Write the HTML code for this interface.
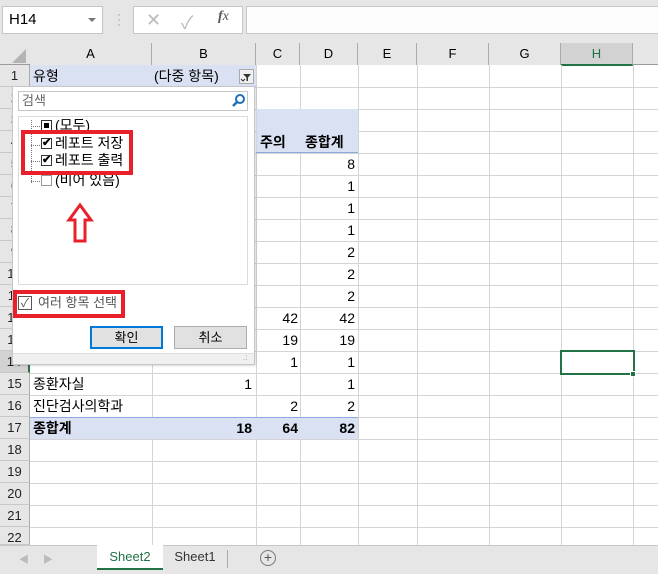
<!DOCTYPE html><html><head><meta charset="utf-8"><style>
*{margin:0;padding:0;box-sizing:border-box}
body{width:658px;height:574px;overflow:hidden;background:#fff;position:relative;font-family:"Liberation Sans","Noto Sans CJK KR",sans-serif;font-size:14px;color:#000}
.a{position:absolute}
.vl{position:absolute;top:65px;height:480px;width:1px;background:#d4d4d4}
.hl{position:absolute;left:0;width:658px;height:1px;background:#d4d4d4}
.rh{position:absolute;left:0;width:30px;height:22px;background:#e6e6e6;border-bottom:1px solid #c8c8c8;border-right:1px solid #ababab;text-align:center;font-size:13px;line-height:22px;color:#222}
.ch{position:absolute;top:43px;height:22px;background:#e6e6e6;border-right:1px solid #ababab;text-align:center;font-size:13px;line-height:22px}
.t{position:absolute;font-size:14px;line-height:22px;white-space:nowrap}
.r{text-align:right}
.blue{position:absolute;background:#d9e1f2}
</style></head><body>
<div class="a" style="left:0;top:0;width:658px;height:43px;background:#e6e6e6"></div>
<div class="a" style="left:2px;top:6px;width:101px;height:28px;background:#fff;border:1px solid #c6c6c6;font-size:15px;line-height:26px;padding-left:6px">H14</div>
<div class="a" style="left:88px;top:18px;border-left:4px solid transparent;border-right:4px solid transparent;border-top:4px solid #777"></div>
<div class="a" style="left:117px;top:12px;color:#999;font-size:12px;line-height:5px">·<br>·<br>·</div>
<div class="a" style="left:133px;top:6px;width:110px;height:28px;background:#fff;border:1px solid #c6c6c6"></div>
<div class="a" style="left:146px;top:10px;color:#bbb;font-size:18px">✕</div>
<div class="a" style="left:181px;top:9px;color:#bbb;font-size:18px">✓</div>
<div class="a" style="left:218px;top:9px;color:#555;font-size:14px;font-style:italic;font-family:'Liberation Serif',serif"><b>f</b>x</div>
<div class="a" style="left:246px;top:6px;width:412px;height:28px;background:#fdfdfd;border:1px solid #c6c6c6;border-right:none"></div>
<div class="a" style="left:0;top:43px;width:658px;height:22px;background:#e6e6e6;border-bottom:1px solid #9a9a9a"></div>
<div class="a" style="left:12px;top:49px;width:0;height:0;border-left:14px solid transparent;border-bottom:14px solid #b4b4b4"></div>
<div class="ch" style="left:30px;width:122px">A</div>
<div class="ch" style="left:152px;width:104px">B</div>
<div class="ch" style="left:256px;width:44px">C</div>
<div class="ch" style="left:300px;width:58px">D</div>
<div class="ch" style="left:358px;width:59px">E</div>
<div class="ch" style="left:417px;width:72px">F</div>
<div class="ch" style="left:489px;width:72px">G</div>
<div class="ch" style="left:561px;width:72px;background:#d2d2d2;color:#217346;border-bottom:2px solid #217346;height:23px">H</div>
<div class="vl" style="left:152px"></div><div class="vl" style="left:256px"></div><div class="vl" style="left:300px"></div><div class="vl" style="left:358px"></div><div class="vl" style="left:417px"></div><div class="vl" style="left:489px"></div><div class="vl" style="left:561px"></div><div class="vl" style="left:633px"></div>
<div class="hl" style="top:87px"></div><div class="hl" style="top:109px"></div><div class="hl" style="top:131px"></div><div class="hl" style="top:153px"></div><div class="hl" style="top:175px"></div><div class="hl" style="top:197px"></div><div class="hl" style="top:219px"></div><div class="hl" style="top:241px"></div><div class="hl" style="top:263px"></div><div class="hl" style="top:285px"></div><div class="hl" style="top:307px"></div><div class="hl" style="top:329px"></div><div class="hl" style="top:351px"></div><div class="hl" style="top:373px"></div><div class="hl" style="top:395px"></div><div class="hl" style="top:417px"></div><div class="hl" style="top:439px"></div><div class="hl" style="top:461px"></div><div class="hl" style="top:483px"></div><div class="hl" style="top:505px"></div><div class="hl" style="top:527px"></div>
<div class="rh" style="top:65px">1</div><div class="rh" style="top:87px">2</div><div class="rh" style="top:109px">3</div><div class="rh" style="top:131px">4</div><div class="rh" style="top:153px">5</div><div class="rh" style="top:175px">6</div><div class="rh" style="top:197px">7</div><div class="rh" style="top:219px">8</div><div class="rh" style="top:241px">9</div><div class="rh" style="top:263px">10</div><div class="rh" style="top:285px">11</div><div class="rh" style="top:307px">12</div><div class="rh" style="top:329px">13</div><div class="rh" style="top:351px;background:#d2d2d2;border-right:2px solid #217346">14</div><div class="rh" style="top:373px">15</div><div class="rh" style="top:395px">16</div><div class="rh" style="top:417px">17</div><div class="rh" style="top:439px">18</div><div class="rh" style="top:461px">19</div><div class="rh" style="top:483px">20</div><div class="rh" style="top:505px">21</div><div class="rh" style="top:527px;height:18px">22</div>
<div class="blue" style="left:30px;top:65px;width:226px;height:22px"></div>
<div class="t" style="left:33px;top:65px">유형</div>
<div class="t" style="left:154px;top:65px">(다중 항목)</div>
<div class="a" style="left:239px;top:69px;width:15px;height:15px;background:#f0f0f0;border:1px solid #aaa"></div>
<svg class="a" style="left:240px;top:70px" width="13" height="13"><path d="M3 4 H11 L8 7.5 V11 H6.5 V7.5 Z" fill="#333"/><path d="M1 9 L3 11 L5 9" fill="none" stroke="#333"/></svg>
<div class="blue" style="left:256px;top:109px;width:102px;height:44px;border-bottom:1px solid #8ea9db"></div>
<div class="t" style="left:260px;top:131px;font-weight:bold">주의</div>
<div class="t" style="left:305px;top:131px;font-weight:bold">종합계</div>
<div class="t r" style="left:300px;top:153px;width:55px">8</div>
<div class="t r" style="left:300px;top:175px;width:55px">1</div>
<div class="t r" style="left:300px;top:197px;width:55px">1</div>
<div class="t r" style="left:300px;top:219px;width:55px">1</div>
<div class="t r" style="left:300px;top:241px;width:55px">2</div>
<div class="t r" style="left:300px;top:263px;width:55px">2</div>
<div class="t r" style="left:300px;top:285px;width:55px">2</div>
<div class="t r" style="left:256px;top:307px;width:42px">42</div><div class="t r" style="left:300px;top:307px;width:55px">42</div>
<div class="t r" style="left:256px;top:329px;width:42px">19</div><div class="t r" style="left:300px;top:329px;width:55px">19</div>
<div class="t r" style="left:256px;top:351px;width:42px">1</div><div class="t r" style="left:300px;top:351px;width:55px">1</div>
<div class="t" style="left:33px;top:373px">종환자실</div><div class="t r" style="left:152px;top:373px;width:100px">1</div><div class="t r" style="left:300px;top:373px;width:55px">1</div>
<div class="t" style="left:33px;top:395px">진단검사의학과</div><div class="t r" style="left:256px;top:395px;width:42px">2</div><div class="t r" style="left:300px;top:395px;width:55px">2</div>
<div class="blue" style="left:30px;top:417px;width:328px;height:22px;border-top:1px solid #8ea9db"></div>
<div class="t" style="left:33px;top:417px;font-weight:bold">종합계</div>
<div class="t r" style="left:152px;top:417px;width:100px;font-weight:bold">18</div>
<div class="t r" style="left:256px;top:417px;width:42px;font-weight:bold">64</div>
<div class="t r" style="left:300px;top:417px;width:55px;font-weight:bold">82</div>
<div class="a" style="left:560px;top:350px;width:75px;height:25px;border:2px solid #217346"></div>
<div class="a" style="left:630px;top:371px;width:6px;height:6px;background:#217346;border:1px solid #fff"></div>
<div class="a" style="left:12px;top:86px;width:243px;height:279px;background:#fff;border:1px solid #c6c6c6;box-shadow:1px 1px 2px rgba(0,0,0,.15)"></div>
<div class="a" style="left:18px;top:91px;width:230px;height:20px;border:1px solid #c6c6c6;font-size:13px;line-height:18px;color:#666;padding-left:3px">검색</div>
<svg class="a" style="left:231px;top:93px" width="15" height="15"><circle cx="9" cy="6" r="4" fill="none" stroke="#1e6fb8" stroke-width="2"/><line x1="6" y1="9" x2="2" y2="13" stroke="#1e6fb8" stroke-width="2.5"/></svg>
<div class="a" style="left:18px;top:116px;width:230px;height:169px;border:1px solid #dcdcdc"></div>
<div class="a" style="left:31px;top:120px;height:63px;border-left:1px dotted #777"></div>
<div class="a" style="left:31px;top:126px;width:9px;border-top:1px dotted #777"></div>
<div class="a" style="left:31px;top:145px;width:9px;border-top:1px dotted #777"></div>
<div class="a" style="left:31px;top:161px;width:9px;border-top:1px dotted #777"></div>
<div class="a" style="left:31px;top:181px;width:9px;border-top:1px dotted #777"></div>
<div class="a" style="left:41px;top:120px;width:11px;height:11px;border:1px solid #333;background:#fff"><div style="margin:2px;width:5px;height:5px;background:#000"></div></div>
<div class="t" style="left:55px;top:114px;font-size:14px">(모두)</div>
<div class="a" style="left:41px;top:138px;width:11px;height:11px;border:1px solid #333;font-size:11px;line-height:9px;font-weight:bold">✔</div>
<div class="t" style="left:55px;top:132px;font-size:14px">레포트 저장</div>
<div class="a" style="left:41px;top:155px;width:11px;height:11px;border:1px solid #333;font-size:11px;line-height:9px;font-weight:bold">✔</div>
<div class="t" style="left:55px;top:149px;font-size:14px">레포트 출력</div>
<div class="a" style="left:41px;top:175px;width:11px;height:11px;border:1px solid #999"></div>
<div class="t" style="left:55px;top:169px;font-size:14px">(비어 있음)</div>
<div class="a" style="left:21px;top:130px;width:112px;height:45px;border:4px solid #e8202a"></div>
<svg class="a" style="left:66px;top:202px" width="28" height="42"><path d="M14 3 L25 18 L19 18 L19 39 L9 39 L9 18 L3 18 Z" fill="#fff" stroke="#e8202a" stroke-width="3"/></svg>
<div class="a" style="left:18px;top:296px;width:14px;height:14px;border:1px solid #555;font-size:12px;line-height:12px;color:#555;text-align:center">✓</div>
<div class="t" style="left:38px;top:292px;font-size:13px;color:#555">여러 항목 선택</div>
<div class="a" style="left:13px;top:290px;width:112px;height:28px;border:4px solid #e8202a"></div>
<div class="a" style="left:90px;top:326px;width:73px;height:23px;background:#e1e1e1;border:2px solid #0078d7;text-align:center;font-size:13px;line-height:19px">확인</div>
<div class="a" style="left:174px;top:326px;width:73px;height:23px;background:#e1e1e1;border:1px solid #adadad;text-align:center;font-size:13px;line-height:21px">취소</div>
<div class="a" style="left:13px;top:353px;width:241px;height:11px;background:#f0f0f0;border-top:1px solid #ddd"></div>
<div class="a" style="left:243px;top:356px;font-size:8px;color:#999;line-height:4px">.:</div>
<div class="a" style="left:0;top:545px;width:658px;height:29px;background:#e6e6e6;border-top:1px solid #c6c6c6"></div>
<div class="a" style="left:19px;top:551px;color:#bbb;font-size:10px">◀ &nbsp; &nbsp; ▶</div>
<div class="a" style="left:97px;top:545px;width:66px;height:25px;background:#fff;border-bottom:2px solid #217346;color:#217346;font-size:13px;line-height:24px;text-align:center">Sheet2</div>
<div class="a" style="left:163px;top:545px;width:64px;font-size:13px;line-height:24px;text-align:center;color:#333">Sheet1</div>
<div class="a" style="left:227px;top:550px;width:1px;height:18px;background:#aaa"></div>
<div class="a" style="left:260px;top:550px;width:16px;height:16px;border:1px solid #777;border-radius:50%;text-align:center;line-height:13px;color:#555;font-size:14px">+</div>
</body></html>
